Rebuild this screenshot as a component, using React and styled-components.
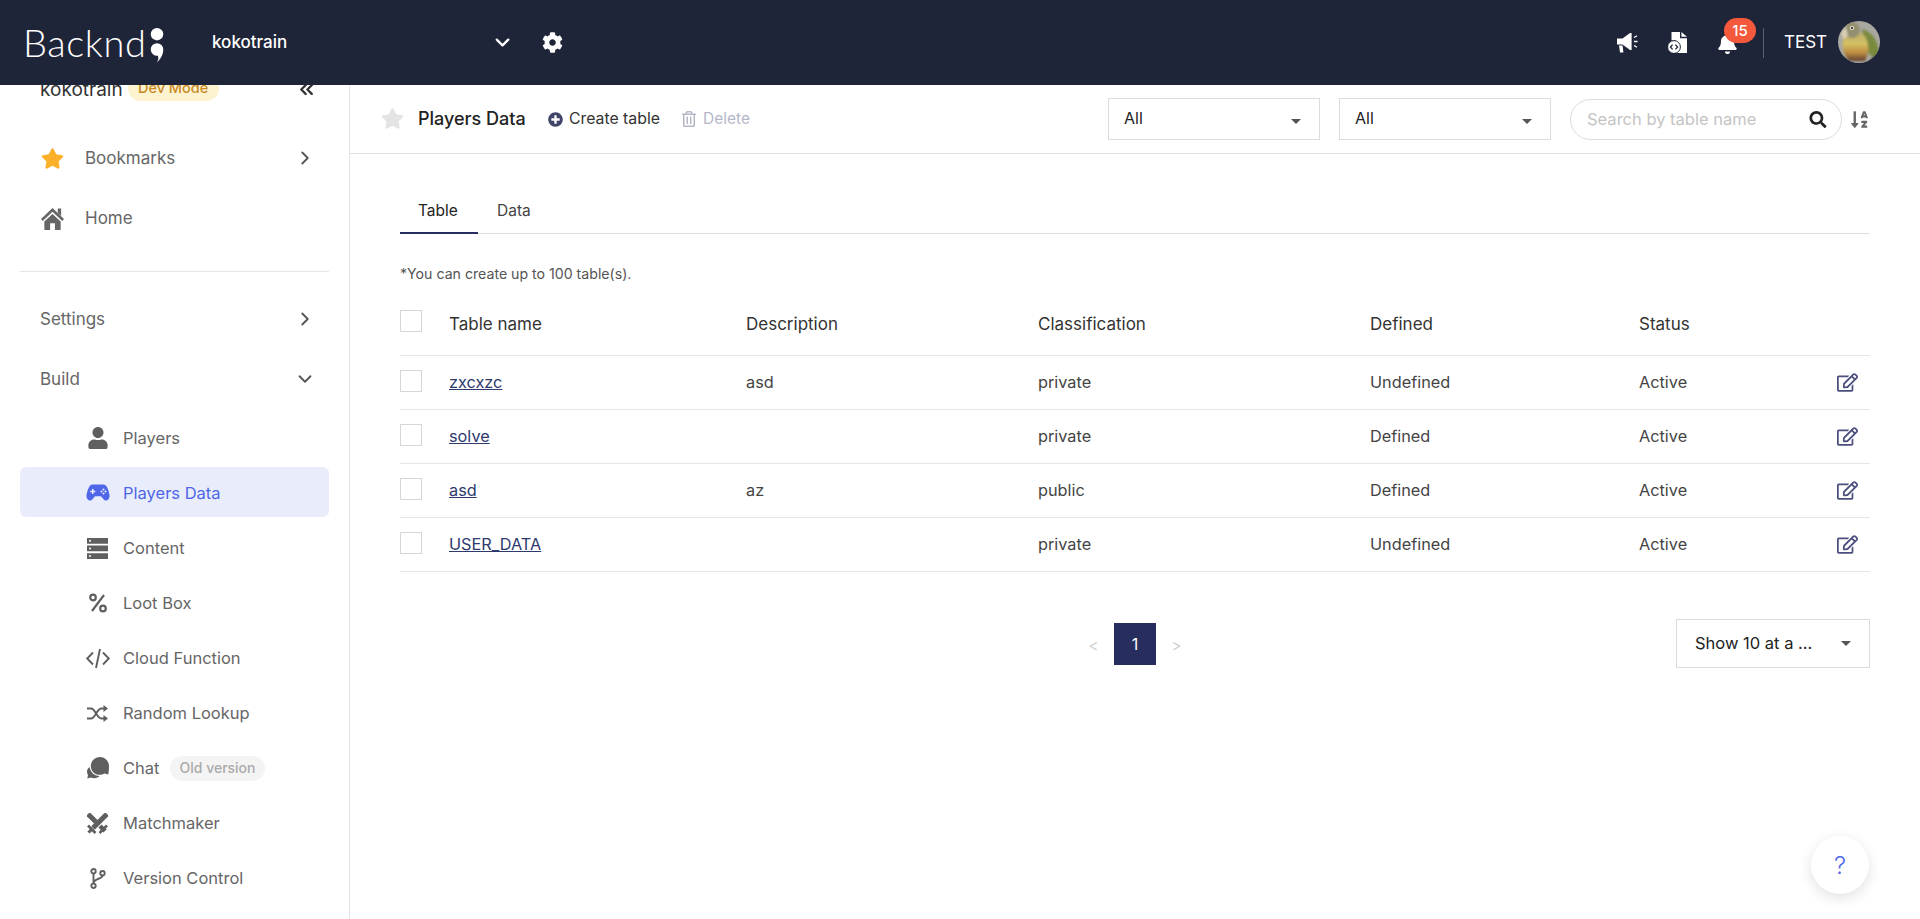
import React from 'react';
import styled, { createGlobalStyle } from 'styled-components';
import { FaStar, FaCog, FaBell, FaSearch, FaPlusCircle, FaRegTrashAlt, FaRegEdit, FaSortAlphaDown, FaUser } from 'react-icons/fa';
import { LuChevronRight, LuChevronDown, LuChevronsLeft } from 'react-icons/lu';

const Global = createGlobalStyle`
  html, body { margin: 0; padding: 0; background: #fff; }
  body { font-family: Inter, "Noto Sans", sans-serif; color: #222; overflow: hidden; }
  * { box-sizing: border-box; }
`;

const Page = styled.div`
  position: relative;
  width: 1920px;
  height: 919px;
  overflow: hidden;
  background: #fff;
`;

const Header = styled.header`
  position: absolute;
  inset: 0 0 auto 0;
  height: 85px;
  background: #1f2538;
  z-index: 2;
  color: #fff;
`;

const LogoText = styled.span`
  position: absolute;
  left: 23px;
  top: 21px;
  font-family: Lato, sans-serif;
  font-weight: 300;
  font-size: 38px;
  line-height: 42px;
  letter-spacing: 0.6px;
  color: #fff;
`;
const LogoMark = styled.svg`
  position: absolute;
  left: 150px;
  top: 28px;
  width: 14px;
  height: 35px;
`;
const ProjectName = styled.span`
  position: absolute;
  left: 212px;
  top: 32px;
  font-size: 17px;
  line-height: 20px;
  font-weight: 500;
`;
const HeaderIcon = styled.span`
  position: absolute;
  left: ${(p) => p.$x}px;
  top: ${(p) => p.$y}px;
  display: flex;
  font-size: ${(p) => p.$size}px;
  color: #fff;
`;
const Badge = styled.span`
  position: absolute;
  left: 1724px;
  top: 18px;
  width: 32px;
  height: 25px;
  border-radius: 12.5px;
  background: #f4593b;
  color: #fff;
  font-size: 15px;
  font-weight: 500;
  line-height: 25px;
  text-align: center;
`;
const HeaderDivider = styled.span`
  position: absolute;
  left: 1763px;
  top: 28px;
  width: 1px;
  height: 30px;
  background: #5a5f70;
`;
const UserName = styled.span`
  position: absolute;
  left: 1784px;
  top: 32px;
  font-size: 17px;
  line-height: 20px;
`;
const Avatar = styled.svg`
  position: absolute;
  left: 1838px;
  top: 21px;
  width: 42px;
  height: 42px;
  border-radius: 50%;
`;

const Sidebar = styled.aside`
  position: absolute;
  left: 0;
  top: 85px;
  bottom: 0;
  width: 350px;
  border-right: 1px solid #e5e5e5;
  overflow: hidden;
`;
const SideTop = styled.div`
  position: absolute;
  left: 40px;
  top: -9px;
  display: flex;
  align-items: center;
  height: 26px;
`;
const SideProject = styled.span`
  font-size: 19px;
  font-weight: 400;
  color: #333;
`;
const DevBadge = styled.span`
  margin-left: 5px;
  margin-top: -1px;
  width: 91px;
  height: 25px;
  border-radius: 12.5px;
  background: #fdf3d0;
  color: #c98a1f;
  font-size: 14.5px;
  font-weight: 500;
  line-height: 24px;
  text-align: center;
`;
const Collapse = styled(LuChevronsLeft)`
  position: absolute;
  left: 296px;
  top: -6px;
  width: 21px;
  height: 21px;
  color: #333;
  stroke-width: 2.6;
`;
const MenuItem = styled.div`
  position: absolute;
  left: 20px;
  top: ${(p) => p.$cy - 85 - 25}px;
  width: 309px;
  height: 50px;
  display: flex;
  align-items: center;
  border-radius: 6px;
  padding-left: ${(p) => (p.$plain ? 20 : p.$sub ? 59 : 21)}px;
  padding-top: ${(p) => (p.$active ? 1 : 0)}px;
  background: ${(p) => (p.$active ? '#e9edfb' : 'transparent')};
  color: ${(p) => (p.$active ? '#4f66e8' : '#666')};
  font-size: ${(p) => (p.$sub ? 16.5 : 17)}px;
  line-height: 20px;
`;
const TopIcon = styled.span`
  width: 44px;
  flex: none;
  display: flex;
  align-items: center;
  font-size: ${(p) => p.$size}px;
  color: ${(p) => p.$color || 'inherit'};
`;
const SubIcon = styled.span`
  width: 37px;
  margin-right: 7px;
  flex: none;
  display: flex;
  align-items: center;
  justify-content: center;
  font-size: 22px;
  color: ${(p) => (p.$active ? '#4f66e8' : '#5f5f5f')};
`;
const MenuArrow = styled.span`
  position: absolute;
  left: 274px;
  top: 14px;
  display: flex;
  font-size: 22px;
  color: #555;
`;
const Pill = styled.span`
  margin-left: 11px;
  height: 25px;
  padding: 0 9px;
  border-radius: 12.5px;
  background: #f4f4f4;
  color: #aaa;
  font-size: 14px;
  font-weight: 500;
  line-height: 23px;
`;
const SideDivider = styled.div`
  position: absolute;
  left: 20px;
  top: 186px;
  width: 309px;
  height: 1px;
  background: #e5e5e5;
`;

const Toolbar = styled.div`
  position: absolute;
  left: 350px;
  right: 0;
  top: 85px;
  height: 69px;
  border-bottom: 1px solid #e2e2e2;
`;
const ToolStar = styled(FaStar)`
  position: absolute;
  left: 31px;
  top: 23px;
  width: 23px;
  height: 21px;
  color: #e4e4e4;
`;
const ToolTitle = styled.span`
  position: absolute;
  left: 68px;
  top: 24px;
  font-size: 18px;
  line-height: 20px;
  font-weight: 500;
  color: #222;
`;
const ToolAction = styled.span`
  position: absolute;
  left: ${(p) => p.$x}px;
  top: 24px;
  display: flex;
  align-items: center;
  gap: ${(p) => p.$gap}px;
  font-size: ${(p) => p.$fs}px;
  line-height: 20px;
  color: ${(p) => (p.$off ? '#b5b7c8' : '#3f4468')};
`;
const ToolText = styled.span`
  color: ${(p) => (p.$off ? '#b5b7c8' : '#333')};
`;
const SelectBox = styled.div`
  position: absolute;
  left: ${(p) => p.$x}px;
  top: ${(p) => p.$y}px;
  width: ${(p) => p.$w}px;
  height: ${(p) => p.$h}px;
  border: 1px solid #dcdcdc;
  background: #fff;
  padding: 0 0 ${(p) => p.$lift}px ${(p) => p.$pad}px;
  display: flex;
  align-items: center;
  font-size: ${(p) => p.$fs || 16}px;
  color: #222;
`;
const Caret = styled.span`
  position: absolute;
  right: ${(p) => p.$r}px;
  top: 50%;
  margin-top: ${(p) => p.$mt}px;
  border-left: 5px solid transparent;
  border-right: 5px solid transparent;
  border-top: 5px solid #555;
`;
const SearchBox = styled.div`
  position: absolute;
  left: 1220px;
  top: 14px;
  width: 272px;
  height: 41px;
  border: 1px solid #dcdcdc;
  border-radius: 21px;
  padding: 0 0 1px 16px;
  display: flex;
  align-items: center;
  font-size: 16.5px;
  color: #c4c4c4;
`;
const SearchGlyph = styled(FaSearch)`
  position: absolute;
  right: 14px;
  top: 11px;
  width: 18px;
  height: 17px;
  color: #222;
`;
const SortGlyph = styled(FaSortAlphaDown)`
  position: absolute;
  left: 1500px;
  top: 25px;
  width: 19px;
  height: 19px;
  color: #666;
`;

const Main = styled.main`
  position: absolute;
  left: 400px;
  top: 154px;
  width: 1470px;
`;
const Tabs = styled.div`
  display: flex;
  height: 80px;
  padding-top: 37px;
  border-bottom: 1px solid #dedede;
`;
const Tab = styled.span`
  height: 43px;
  width: ${(p) => p.$w}px;
  padding-left: ${(p) => p.$pad}px;
  font-size: 15.5px;
  line-height: 40px;
  color: ${(p) => (p.$active ? '#222' : '#444')};
  border-bottom: ${(p) => (p.$active ? '2px solid #272e5f' : '0')};
`;
const Note = styled.div`
  margin-top: 31px;
  font-size: 14.15px;
  line-height: 18px;
  color: #555;
`;
const Row = styled.div`
  position: relative;
  display: grid;
  grid-template-columns: 49px 297px 292px 332px 269px 1fr;
  align-items: center;
  height: ${(p) => p.$h}px;
  margin-top: ${(p) => p.$mt || 0}px;
  padding-top: ${(p) => p.$pt || 0}px;
  padding-bottom: ${(p) => p.$pb || 0}px;
  border-bottom: 1px solid #e6e6e6;
  font-size: ${(p) => (p.$head ? 17 : 16.3)}px;
  color: ${(p) => (p.$head ? '#333' : '#444')};
`;
const Check = styled.span`
  display: block;
  width: 22px;
  height: 22px;
  border: 1px solid #d6d6d6;
  margin-top: ${(p) => p.$top}px;
`;
const TableLink = styled.a`
  color: #2e3a6e;
  text-decoration: underline;
`;
const EditGlyph = styled(FaRegEdit)`
  position: absolute;
  right: 12px;
  top: 17px;
  width: 21px;
  height: 19px;
  color: #4a4f7e;
`;
const Pager = styled.div`
  position: absolute;
  left: 1073px;
  top: 623px;
  display: flex;
  align-items: center;
`;
const PageArrow = styled.span`
  width: 41px;
  height: 42px;
  padding-top: 2px;
  display: flex;
  align-items: center;
  justify-content: center;
  color: #c8c8c8;
  font-size: 16px;
  font-weight: 300;
`;
const PageNum = styled.span`
  width: 42px;
  height: 42px;
  background: #272e5f;
  color: #fff;
  font-size: 16px;
  line-height: 42px;
  text-align: center;
`;
const Help = styled.div`
  position: absolute;
  left: 1811px;
  top: 836px;
  width: 58px;
  height: 58px;
  border-radius: 50%;
  background: #fff;
  box-shadow: 0 4px 14px rgba(0, 0, 0, 0.12);
  color: #4f66e8;
  font-size: 24px;
  font-weight: 300;
  line-height: 59px;
  text-align: center;
`;

const Home = () => (
  <svg width="23" height="23" viewBox="0 0 24 24" fill="currentColor">
    <path d="M12 1 L24 12.5 L22.2 14.5 L12 5 L1.8 14.5 L0 12.5 Z" />
    <path d="M17.5 1.5 h3.5 v8 l-3.5 -3.3 z" />
    <path d="M3.5 15 L12 7.3 L20.5 15 V24 H14.5 V17 H9.5 V24 H3.5 Z" />
  </svg>
);
const Gamepad = () => (
  <svg width="24" height="18" viewBox="0 0 24 18" fill="currentColor">
    <path d="M6.5 .5 h11 c3 0 5 5 6 10.5 c.7 4.2 -3.4 7.2 -6 4.3 l-2.5 -3 h-6 l-2.5 3 c-2.6 2.9 -6.7 -.1 -6 -4.3 C1.5 5.5 3.5 .5 6.5 .5 z" />
    <path d="M6 5 h1.5 v1.8 h1.8 v1.4 h-1.8 v1.8 H6 V8.2 H4.2 V6.8 H6 z" fill="#e9edfb" />
    <circle cx="17.5" cy="5.5" r="1" fill="#e9edfb" />
    <circle cx="15.5" cy="7.5" r="1" fill="#e9edfb" />
    <circle cx="19.5" cy="7.5" r="1" fill="#e9edfb" />
    <circle cx="17.5" cy="9.5" r="1" fill="#e9edfb" />
  </svg>
);
const Content = () => (
  <svg width="21" height="21" viewBox="0 0 21 21" fill="currentColor">
    <path d="M0 0 h21 v5.7 H0 z M0 7.6 h21 v5.7 H0 z M0 15.2 h21 V21 H0 z" />
    <circle cx="3" cy="2.85" r="1" fill="#fff" />
    <circle cx="3" cy="10.5" r="1" fill="#fff" />
    <circle cx="3" cy="18.1" r="1" fill="#fff" />
  </svg>
);
const Percent = () => (
  <svg width="18" height="20" viewBox="0 0 18 20" fill="none" stroke="currentColor" strokeWidth="2.2">
    <circle cx="4" cy="4.5" r="2.8" />
    <circle cx="14" cy="15.5" r="2.8" />
    <path d="M15 2 L3 18" />
  </svg>
);
const Code = () => (
  <svg width="24" height="17" viewBox="0 0 24 17" fill="none" stroke="currentColor" strokeWidth="1.9" style={{ overflow: 'visible' }}>
    <path d="M7 2.5 L1.2 8.5 L7 14.5 M17 2.5 L22.8 8.5 L17 14.5 M14 -1 L10 18" />
  </svg>
);
const Shuffle = () => (
  <svg width="21" height="17" viewBox="0 0 21 17" fill="none" stroke="currentColor" strokeWidth="1.9">
    <path d="M0 3.5 h4 c4.5 0 5.500 10 10.500 10 h3 M0 13.500 h4 c4.500 0 5.500 -10 10.500 -10 h3" />
    <path d="M16.5 0 L21 3.5 L16.5 7 Z M16.5 10 L21 13.5 L16.5 17 Z" fill="currentColor" stroke="none" />
  </svg>
);
const Chat = () => (
  <svg width="22" height="22" viewBox="0 0 22 22" fill="currentColor">
    <path d="M2.5 10 C-.5 12 -.5 16 1 18 L.3 21.5 L4 20.5 C7 22 11 21 12.5 19 C7 19 3.5 15 2.5 10 Z" />
    <path d="M13 0 C18 0 22 4 22 9 C22 12 21.7 15 21.3 17.5 L17.5 16.6 C15 18 11.5 18.3 9 17.2 C5.500 15.700 3.800 12.500 3.800 9 C3.800 4 8 0 13 0 Z" />
  </svg>
);
const Swords = () => (
  <svg width="21" height="21" viewBox="0 0 21 21" fill="none" stroke="currentColor">
    <path d="M20 1 L6 15" strokeWidth="5" />
    <path d="M1 1 L9 9" strokeWidth="5" />
    <path d="M13 13 L18 18" strokeWidth="4.5" />
    <path d="M1 12.5 L8.5 20 M12.5 20 L20 12.5" strokeWidth="2.6" />
    <path d="M1.5 19.5 L4.5 16.5" strokeWidth="3" />
  </svg>
);
const Branch = () => (
  <svg width="16" height="21" viewBox="0 0 16 21" fill="none" stroke="currentColor" strokeWidth="1.9">
    <circle cx="3.5" cy="3.2" r="2.2" />
    <circle cx="3.5" cy="17.8" r="2.2" />
    <circle cx="12.5" cy="5.2" r="2.2" />
    <path d="M3.5 5.4 V15.6 M12.5 7.4 C12.5 11.5 3.5 10 3.5 15.6" />
  </svg>
);
const Megaphone = () => (
  <svg width="22" height="21" viewBox="0 0 22 21" fill="#fff">
    <path d="M1 6.5 h5.5 L14 1 h1.6 v17 H14 L6.5 12.5 H1 z" />
    <path d="M3 13.5 h3.6 l.8 7 H4 z" />
    <path d="M18 5.5 l3 -1.8 M18 9.5 h3.5 M18 13.5 l3 1.8" stroke="#fff" strokeWidth="1.3" fill="none" />
  </svg>
);
const FileCode = () => (
  <svg width="19" height="21" viewBox="0 0 19 21" fill="#fff">
    <path d="M3.5 0 h8.5 v6.2 h7 V21 H8 V8.5 H3.5 z" />
    <path d="M13.4 0 L19 4.8 h-5.6 z" />
    <circle cx="6" cy="15" r="6.4" fill="#fff" stroke="#1f2538" strokeWidth="1" />
    <path d="M4.6 12.6 L2.4 15 L4.6 17.4 M7.4 12.6 L9.6 15 L7.4 17.4" stroke="#1f2538" strokeWidth="1.3" fill="none" />
  </svg>
);

const items = [
  { l: 'Players', cy: 438, i: <FaUser /> },
  { l: 'Players Data', cy: 492, i: <Gamepad />, active: true },
  { l: 'Content', cy: 548, i: <Content /> },
  { l: 'Loot Box', cy: 603, i: <Percent /> },
  { l: 'Cloud Function', cy: 658, i: <Code /> },
  { l: 'Random Lookup', cy: 713, i: <Shuffle /> },
  { l: 'Chat', cy: 768, i: <Chat />, pill: 'Old version' },
  { l: 'Matchmaker', cy: 823, i: <Swords /> },
  { l: 'Version Control', cy: 878, i: <Branch /> },
];

const rows = [
  ['zxcxzc', 'asd', 'private', 'Undefined'],
  ['solve', '', 'private', 'Defined'],
  ['asd', 'az', 'public', 'Defined'],
  ['USER_DATA', '', 'private', 'Undefined'],
];

const Bird = () => (
  <Avatar viewBox="0 0 42 42">
    <defs>
      <linearGradient id="belly" x1="0" y1="0" x2="0" y2="1">
        <stop offset="0" stopColor="#b5a86e" />
        <stop offset="0.42" stopColor="#d4c263" />
        <stop offset="0.72" stopColor="#bd8d42" />
        <stop offset="1" stopColor="#5f3f2e" />
      </linearGradient>
      <filter id="soft"><feGaussianBlur stdDeviation="0.8" /></filter>
    </defs>
    <rect width="42" height="42" fill="#a9a8a0" />
    <g filter="url(#soft)">
      <path d="M24 8 Q38 12 41 30 L37 38 L28 30 Z" fill="#7a8a3d" />
      <path d="M6 14 Q16 6 26 14 Q34 26 27 40 L11 40 Q2 30 6 14 Z" fill="url(#belly)" />
      <circle cx="14" cy="9" r="8" fill="#93906f" />
      <path d="M3 12 L8 6 L10 15 L5 18 Z" fill="#d9cfb6" />
      <path d="M33 38 L42 30 L42 42 L30 42 Z" fill="#55544a" />
    </g>
    <circle cx="14" cy="7" r="2.1" fill="#e8e6d8" />
    <circle cx="14" cy="7" r="1.1" fill="#1c1c1c" />
  </Avatar>
);

export default function App() {
  return (
    <Page>
      <Global />
      <Header>
        <LogoText>Backnd</LogoText>
        <LogoMark viewBox="0 0 14 35">
          <circle cx="7" cy="6.2" r="6.2" fill="#fff" />
          <path d="M.7 21.5 a6.3 6.3 0 0 1 12.6 0 q0 7 -6.300 13 q2.300 -3.500 1 -6.800 a6.300 6.300 0 0 1 -7.300 -6.200z" fill="#fff" />
        </LogoMark>
        <ProjectName>kokotrain</ProjectName>
        <HeaderIcon $x={491} $y={31} $size={23}><LuChevronDown style={{ strokeWidth: 2.4 }} /></HeaderIcon>
        <HeaderIcon $x={542} $y={32} $size={21}><FaCog /></HeaderIcon>
        <HeaderIcon $x={1616} $y={32} $size={21}><Megaphone /></HeaderIcon>
        <HeaderIcon $x={1668} $y={32} $size={21}><FileCode /></HeaderIcon>
        <HeaderIcon $x={1717} $y={33} $size={21}><FaBell /></HeaderIcon>
        <Badge>15</Badge>
        <HeaderDivider />
        <UserName>TEST</UserName>
        <Bird />
      </Header>

      <Sidebar>
        <SideTop>
          <SideProject>kokotrain</SideProject>
          <DevBadge>Dev Mode</DevBadge>
        </SideTop>
        <Collapse />
        <MenuItem $cy={158}>
          <TopIcon $color="#fbb02a" $size={23}><FaStar /></TopIcon>Bookmarks
          <MenuArrow><LuChevronRight /></MenuArrow>
        </MenuItem>
        <MenuItem $cy={218}>
          <TopIcon $size={23}><Home /></TopIcon>Home
        </MenuItem>
        <SideDivider />
        <MenuItem $cy={319} $plain>Settings<MenuArrow><LuChevronRight /></MenuArrow></MenuItem>
        <MenuItem $cy={379} $plain>Build<MenuArrow><LuChevronDown /></MenuArrow></MenuItem>
        {items.map((it) => (
          <MenuItem key={it.l} $cy={it.cy} $sub $active={it.active}>
            <SubIcon $active={it.active}>{it.i}</SubIcon>
            {it.l}
            {it.pill && <Pill>{it.pill}</Pill>}
          </MenuItem>
        ))}
      </Sidebar>

      <Toolbar>
        <ToolStar />
        <ToolTitle>Players Data</ToolTitle>
        <ToolAction $x={198} $gap={6} $fs={15.8}><FaPlusCircle size={15} /><ToolText>Create table</ToolText></ToolAction>
        <ToolAction $x={331} $gap={6} $fs={15.5} $off><FaRegTrashAlt size={16} /><ToolText $off>Delete</ToolText></ToolAction>
        <SelectBox $x={758} $y={13} $w={212} $h={42} $pad={15} $lift={2}>All<Caret $r={18} $mt={0} /></SelectBox>
        <SelectBox $x={989} $y={13} $w={212} $h={42} $pad={15} $lift={2}>All<Caret $r={18} $mt={0} /></SelectBox>
        <SearchBox>Search by table name<SearchGlyph /></SearchBox>
        <SortGlyph />
      </Toolbar>

      <Main>
        <Tabs>
          <Tab $active $w={78} $pad={18}>Table</Tab>
          <Tab $w={60} $pad={19}>Data</Tab>
        </Tabs>
        <Note>*You can create up to 100 table(s).</Note>
        <Row $head $h={69} $mt={4} $pt={6}>
          <Check $top={-7} />
          <span>Table name</span>
          <span>Description</span>
          <span>Classification</span>
          <span>Defined</span>
          <span>Status</span>
        </Row>
        {rows.map((r) => (
          <Row key={r[0]} $h={54} $pb={2}>
            <Check $top={-1} />
            <TableLink>{r[0]}</TableLink>
            <span>{r[1]}</span>
            <span>{r[2]}</span>
            <span>{r[3]}</span>
            <span>Active</span>
            <EditGlyph />
          </Row>
        ))}
      </Main>

      <Pager>
        <PageArrow>&lt;</PageArrow>
        <PageNum>1</PageNum>
        <PageArrow>&gt;</PageArrow>
      </Pager>
      <SelectBox $x={1676} $y={619} $w={194} $h={49} $pad={18} $lift={1} $fs={16.5}>Show 10 at a ...<Caret $r={18} $mt={-3} /></SelectBox>
      <Help>?</Help>
    </Page>
  );
}
